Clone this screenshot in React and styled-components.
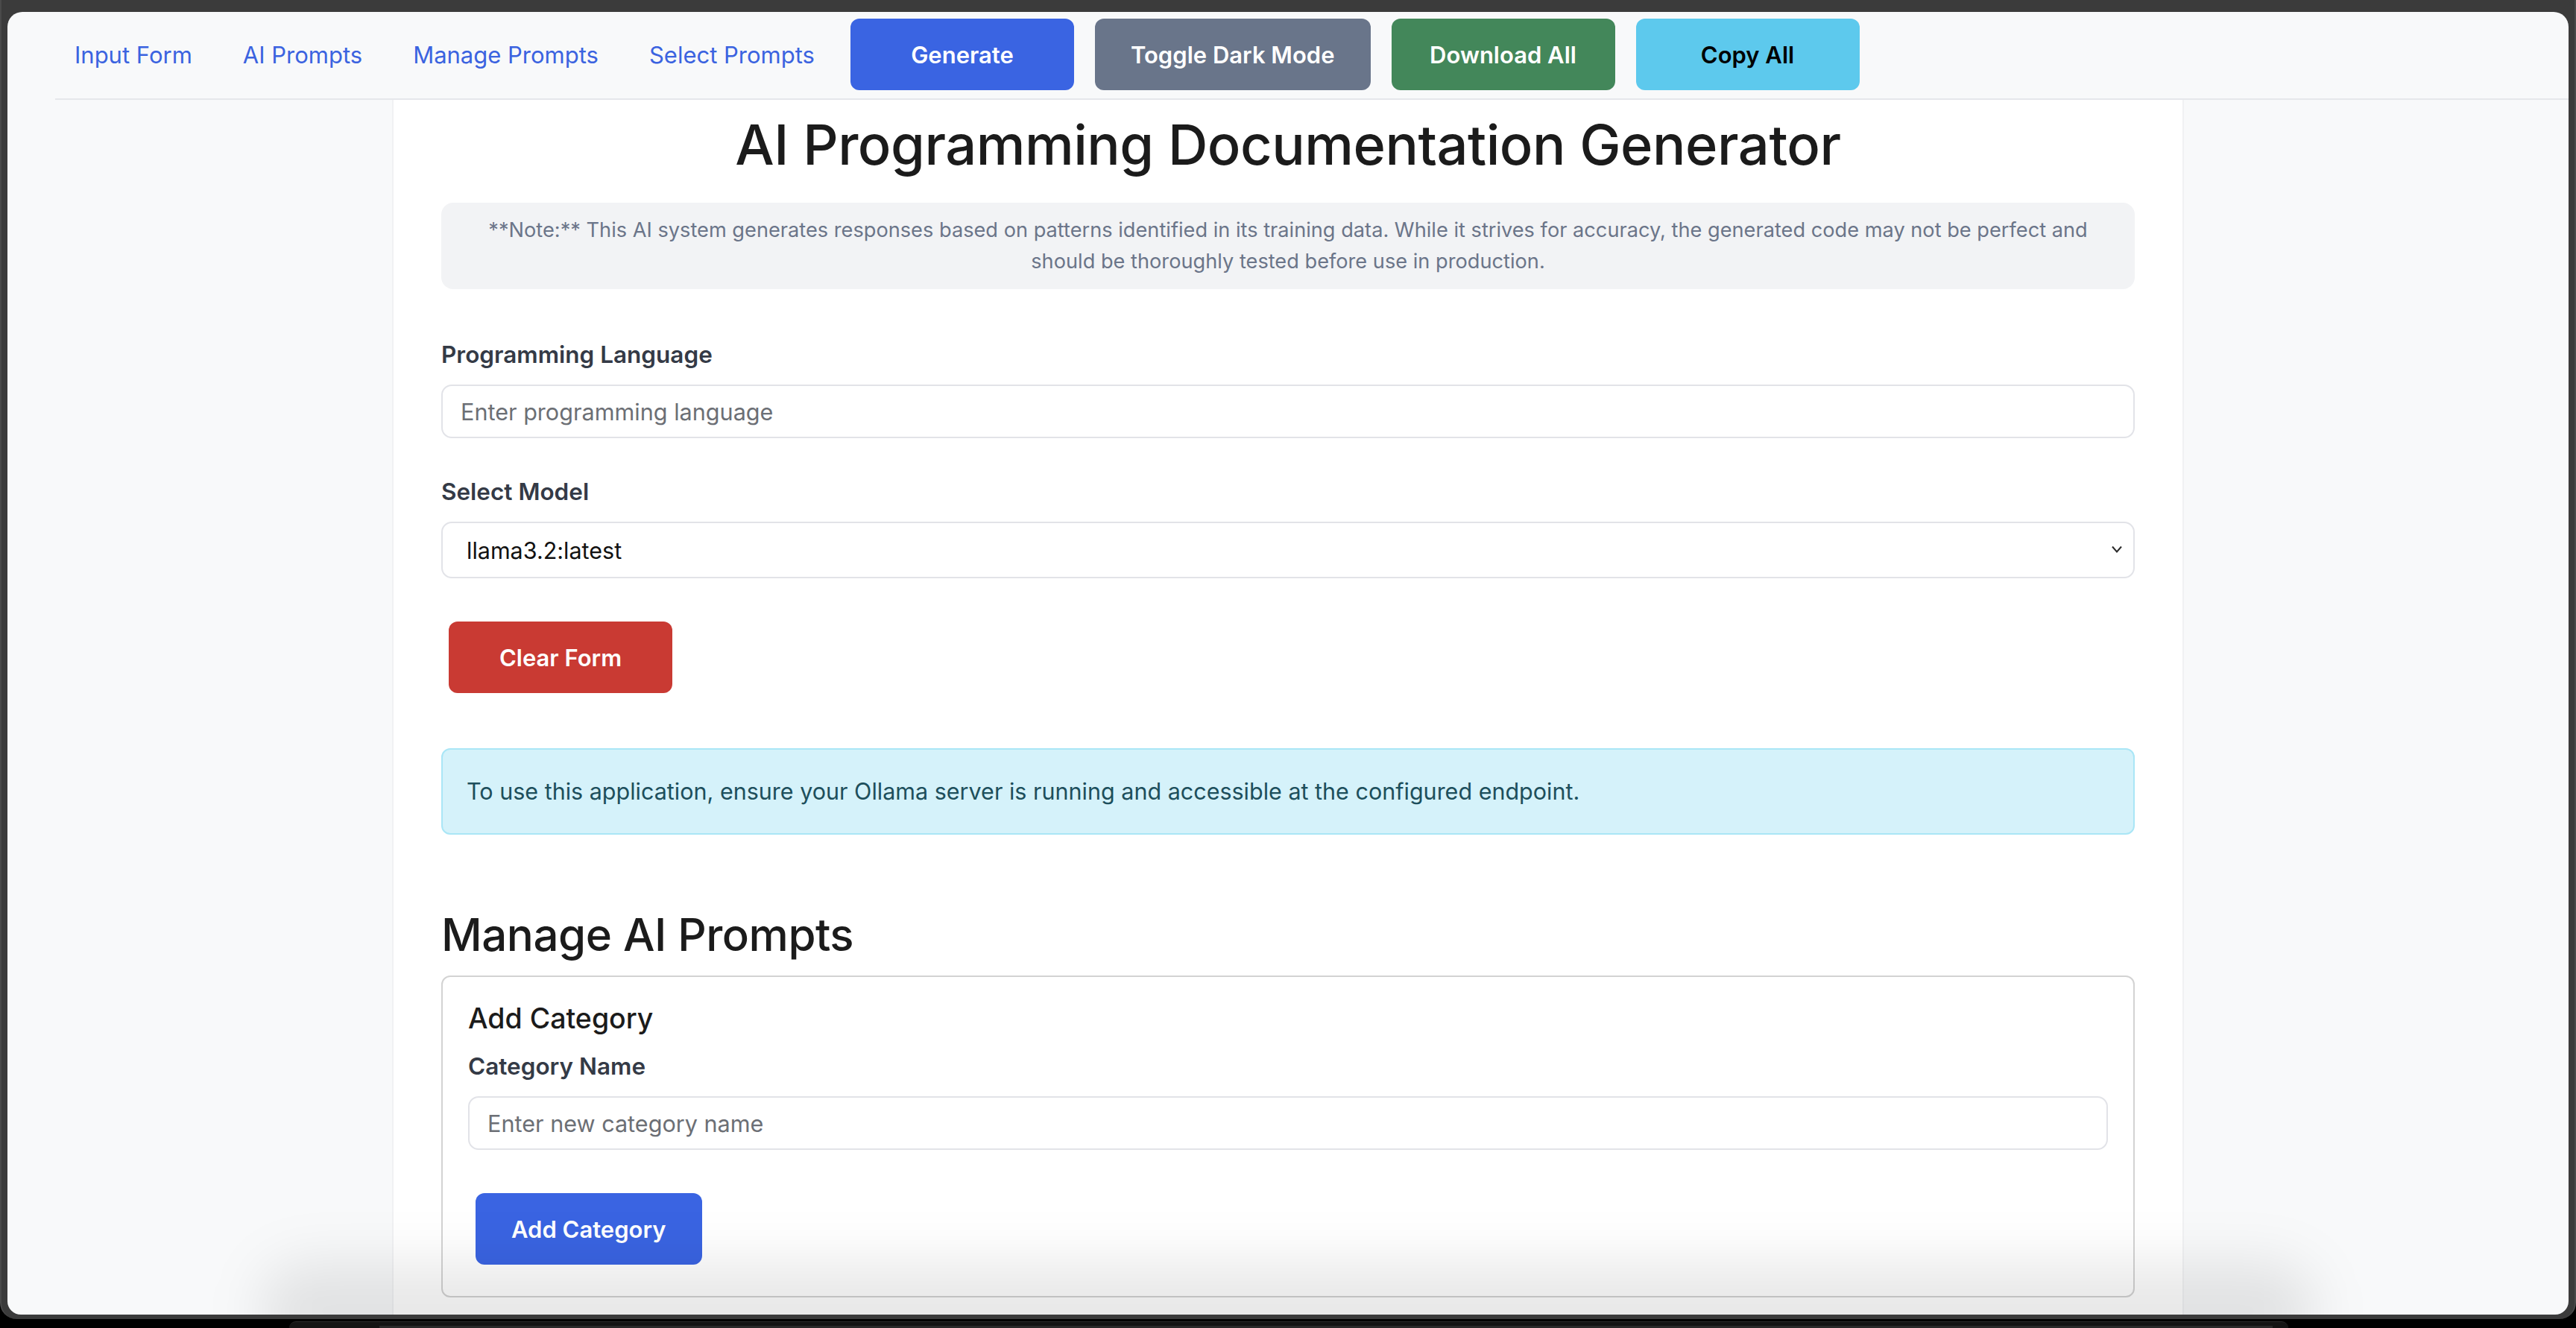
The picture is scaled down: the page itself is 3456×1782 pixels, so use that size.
import React from "react";
import styled, { createGlobalStyle } from "styled-components";

const GlobalStyle = createGlobalStyle`
  html, body {
    margin: 0;
    padding: 0;
    background: #000;
  }
  * {
    box-sizing: border-box;
  }
`;

const font = `"Inter", "Noto Sans", "Liberation Sans", sans-serif`;

const Screen = styled.div`
  width: 3456px;
  height: 1782px;
  background: #000;
  display: flex;
  flex-direction: column;
  overflow: hidden;
  font-family: ${font};
`;

const Frame = styled.div`
  background: #3b3b3b;
  padding: 16px 8px 6px 8px;
  border-radius: 0 0 22px 22px;
  border-left: 2px solid #4a4a4a;
  border-right: 2px solid #4a4a4a;
`;

const Window = styled.div`
  position: relative;
  height: 1748px;
  background: #f8f9fa;
  border-radius: 20px 20px 18px 18px;
  overflow: hidden;
  display: flex;
  flex-direction: column;
`;

const Dock = styled.div`
  margin: 3px 386px 0 388px;
  height: 20px;
  background: #141414;
  border-radius: 14px 14px 0 0;
  border-top: 1px solid #2a2a2a;
`;

const Navbar = styled.nav`
  height: 118px;
  margin-left: 64px;
  padding-left: 0;
  display: flex;
  align-items: center;
  border-bottom: 2px solid #e5e7eb;
  padding-bottom: 2px;
`;

const NavLinks = styled.div`
  display: flex;
  align-items: center;
  margin-left: -8px;
`;

const NavLink = styled.a`
  padding: 0 34px;
  font-size: 31px;
  color: #3b63e0;
  text-decoration: none;
  white-space: nowrap;
`;

const NavButton = styled.button`
  margin: 0 14px;
  min-width: 300px;
  height: 96px;
  padding: 0 48px;
  border: none;
  border-radius: 12px;
  background: ${(p) => p.$bg};
  color: ${(p) => p.$fg || "#fff"};
  font-family: ${font};
  font-size: 31px;
  font-weight: 600;
  white-space: nowrap;
`;

const Column = styled.main`
  width: 2404px;
  margin: 0 auto;
  flex: 1;
  background: #fff;
  border-left: 2px solid #f0f1f3;
  border-right: 2px solid #f0f1f3;
  padding: 12px 64px 0;
`;

const Title = styled.h1`
  margin: 0 0 30px;
  font-size: 74px;
  line-height: 96px;
  font-weight: 500;
  color: #1b1b1b;
  text-align: center;
  letter-spacing: -0.5px;
`;

const Note = styled.div`
  background: #f2f3f5;
  border-radius: 16px;
  padding: 16px 40px;
  font-size: 27.2px;
  line-height: 42px;
  color: #6b7589;
  text-align: center;
`;

const Group = styled.div`
  margin-top: ${(p) => p.$top || 0}px;
`;

const Label = styled.label`
  display: block;
  margin-bottom: 16px;
  font-size: 31.5px;
  line-height: 48px;
  font-weight: 600;
  color: #343a46;
`;

const TextInput = styled.input`
  display: block;
  width: 100%;
  height: 72px;
  padding: 0 24px;
  border: 2px solid #e2e3e8;
  border-radius: 14px;
  background: #fff;
  font-family: ${font};
  font-size: 30.6px;
  color: #212529;
  outline: none;

  &::placeholder {
    color: #6c6f75;
  }
`;

const SelectWrap = styled.div`
  position: relative;
`;

const Select = styled.select`
  display: block;
  width: 100%;
  height: 76px;
  padding: 0 60px 0 32px;
  border: 2px solid #e2e3e8;
  border-radius: 14px;
  background: #fff;
  appearance: none;
  font-family: ${font};
  font-size: 30.5px;
  color: #111;
  outline: none;
`;

const Chevron = styled.svg`
  position: absolute;
  right: 16px;
  top: 31px;
  pointer-events: none;
`;

const ActionButton = styled.button`
  display: block;
  margin: 10px;
  min-width: 300px;
  height: 96px;
  padding: 0 48px;
  border: none;
  border-radius: 12px;
  background: ${(p) => p.$bg};
  color: #fff;
  font-family: ${font};
  font-size: 31px;
  font-weight: 600;
`;

const ButtonRow = styled.div`
  display: flex;
  margin-top: 48px;
`;

const Alert = styled.div`
  margin-top: 64px;
  padding: 32px;
  background: #d5f2fa;
  border: 2px solid #aae6f6;
  border-radius: 12px;
  font-size: 30.5px;
  line-height: 48px;
  color: #1d4f5c;
`;

const SectionTitle = styled.h2`
  margin: 96px 0 16px;
  font-size: 60px;
  line-height: 77px;
  font-weight: 500;
  color: #1b1b1b;
  letter-spacing: -0.5px;
`;

const Card = styled.section`
  border: 2px solid #d3d3d3;
  border-radius: 12px;
  padding: 32px 34px;
`;

const CardTitle = styled.h3`
  margin: 0 0 16px;
  font-size: 37.5px;
  line-height: 48px;
  font-weight: 500;
  color: #1b1b1b;
`;

const BottomShade = styled.div`
  position: absolute;
  left: 340px;
  right: 340px;
  bottom: -60px;
  height: 130px;
  background: rgba(0, 0, 0, 0.09);
  border-radius: 60px;
  filter: blur(36px);
  pointer-events: none;
`;

export default function App() {
  return (
    <>
      <GlobalStyle />
      <Screen>
        <Frame>
          <Window>
            <Navbar>
              <NavLinks>
                <NavLink href="#">Input Form</NavLink>
                <NavLink href="#">AI Prompts</NavLink>
                <NavLink href="#">Manage Prompts</NavLink>
                <NavLink href="#">Select Prompts</NavLink>
              </NavLinks>
              <NavButton $bg="#3a64e2">Generate</NavButton>
              <NavButton $bg="#69758a">Toggle Dark Mode</NavButton>
              <NavButton $bg="#43875a">Download All</NavButton>
              <NavButton $bg="#5dc9ed" $fg="#000">
                Copy All
              </NavButton>
            </Navbar>
            <Column>
              <Title>AI Programming Documentation Generator</Title>
              <Note>
                **Note:** This AI system generates responses based on patterns
                identified in its training data. While it strives for accuracy,
                the generated code may not be perfect and should be thoroughly
                tested before use in production.
              </Note>

              <Group $top={64}>
                <Label>Programming Language</Label>
                <TextInput placeholder="Enter programming language" />
              </Group>

              <Group $top={48}>
                <Label>Select Model</Label>
                <SelectWrap>
                  <Select defaultValue="llama3.2:latest">
                    <option>llama3.2:latest</option>
                  </Select>
                  <Chevron width="16" height="12" viewBox="0 0 16 12">
                    <path
                      d="M2 2.5 L8 9.5 L14 2.5"
                      fill="none"
                      stroke="#2b2b2b"
                      strokeWidth="2"
                    />
                  </Chevron>
                </SelectWrap>
              </Group>

              <ButtonRow>
                <ActionButton $bg="#c93a33">Clear Form</ActionButton>
              </ButtonRow>

              <Alert>
                To use this application, ensure your Ollama server is running
                and accessible at the configured endpoint.
              </Alert>

              <SectionTitle>Manage AI Prompts</SectionTitle>
              <Card>
                <CardTitle>Add Category</CardTitle>
                <Label>Category Name</Label>
                <TextInput placeholder="Enter new category name" />
                <ButtonRow>
                  <ActionButton $bg="#3a64e2">Add Category</ActionButton>
                </ButtonRow>
              </Card>
            </Column>
            <BottomShade />
          </Window>
        </Frame>
        <Dock />
      </Screen>
    </>
  );
}
